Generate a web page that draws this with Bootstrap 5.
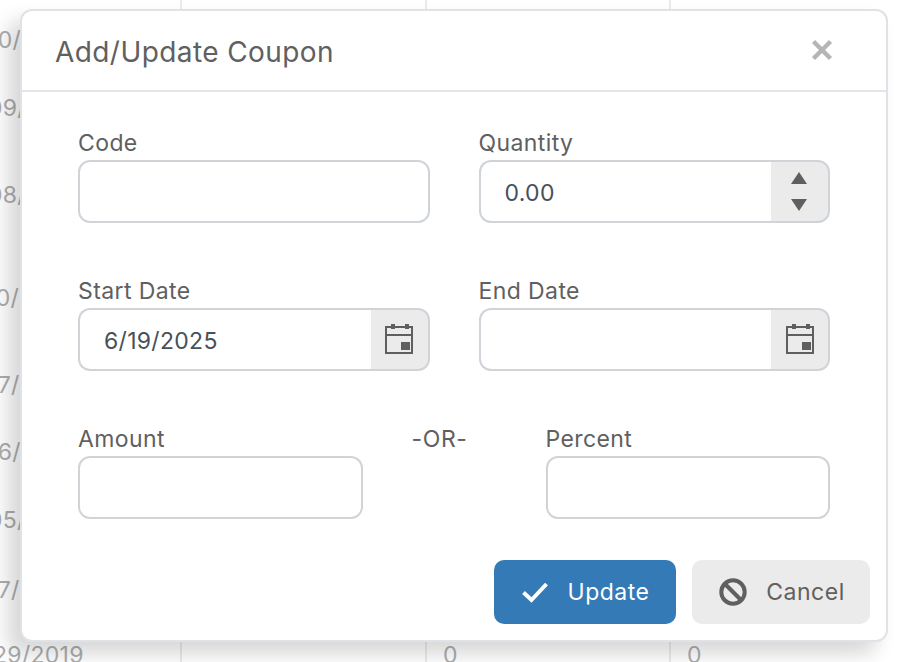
<!DOCTYPE html>
<html lang="en">
<head>
  <meta charset="UTF-8" />
  <meta name="viewport" content="width=device-width, initial-scale=1" />
  <title>Add/Update Coupon</title>
  <link href="https://cdn.jsdelivr.net/npm/bootstrap@5.3.3/dist/css/bootstrap.min.css" rel="stylesheet">
  <style>
    html, body { height: 662px; overflow: hidden; }
    body { font-family: Inter, "Liberation Sans", sans-serif; background: #fff; color: #606060; position: relative; letter-spacing: .3px; }

    /* table behind the dialog */
    .bg-grid { width: 904px; border-collapse: collapse; table-layout: fixed; font-size: 23px; color: #adadad; }
    .bg-grid td { border-left: 2px solid #ebebeb; padding: 0 0 0 16px; vertical-align: middle; white-space: nowrap; line-height: 26px; }
    .bg-grid td:first-child { border-left: 0; width: 181px; padding-left: 0; }
    .bg-grid td:first-child span { display: block; margin-left: -12px; }
    .bg-grid .r4 td:first-child span { margin-left: -14px; }
    .bg-grid .r9 td:first-child span { margin-left: -7px; }
    .bg-grid td:nth-child(2) { width: 245px; }
    .bg-grid td:nth-child(3) { width: 244px; }
    .r1 { height: 80px; } .r2 { height: 56px; } .r3 { height: 118px; } .r4 { height: 88px; }
    .r5 { height: 86px; } .r6 { height: 48px; } .r7 { height: 88px; } .r8 { height: 52px; } .r9 { height: 78px; }

    .coupon-dialog { position: absolute; left: 20px; top: 9px; width: 868px; margin: 0; max-width: none; }
    .coupon-dialog .modal-content { height: 633px; background: #fff; border: 2px solid #dfe2e6; border-radius: 12px; box-shadow: -12px 12px 20px rgba(0,0,0,.16); }
    .coupon-dialog .modal-header { height: 81px; padding: 0 53px 0 33px; border-bottom: 2px solid #e2e5e9; flex-shrink: 0; }
    .coupon-title { font-size: 28px; font-weight: 400; letter-spacing: .42px; color: #606060; margin: 2px 0 0; line-height: 1; }
    .close-x { background: none; border: 0; padding: 0; line-height: 0; margin-top: -1px; }
    .coupon-dialog .modal-body { padding: 37px 56px 0 56px; flex: 0 0 auto; }
    .field-row { display: flex; gap: 49px; margin-bottom: 54px; }
    .field-wrap { width: 352px; }
    .field-narrow { flex: 1 1 0; }
    .or-mark { flex: 0 0 183px; text-align: center; font-size: 23px; letter-spacing: .6px; line-height: 28px; padding-right: 29px; }
    .row-three { gap: 0; }
    .field-label { display: block; font-size: 23px; line-height: 28px; margin-bottom: 3px; color: #606060; letter-spacing: .4px; }
    .coupon-input.form-control { height: 63px; border: 2px solid #d0d4d8; border-radius: 12px; font-size: 23px; letter-spacing: .3px; color: #495057; padding: 2px 24px 0; box-shadow: none; }
    .input-group .coupon-input.form-control { border-right: 0; }
    .coupon-addon.input-group-text { width: 60px; padding: 0; justify-content: center; background: #ebebeb; border: 2px solid #d0d4d8; border-left: 0; border-radius: 0 12px 12px 0; }
    .spin-stack { display: flex; flex-direction: column; gap: 15px; align-items: center; }
    .cal-icon { margin: -2px 0 0 1px; }
    .coupon-dialog .modal-footer { position: absolute; right: 16px; bottom: 16px; border: 0; padding: 0; gap: 16px; }
    .coupon-dialog .modal-footer .btn { margin: 0; height: 64px; border-radius: 10px; border: 0; font-size: 23px; letter-spacing: .5px; display: flex; align-items: center; justify-content: center; gap: 19px; padding: 0; }
    .btn-update { width: 182px; background: #337ab7; color: #fff; }
    .btn-dismiss { width: 178px; background: #ebebeb; color: #606060; }
    .btn-dismiss svg { margin-left: 2px; }
  </style>
</head>
<body>
  <table class="bg-grid">
    <tr class="r1"><td><span>10/30/2019</span></td><td></td><td></td><td></td></tr>
    <tr class="r2"><td><span>09/30/2019</span></td><td></td><td></td><td></td></tr>
    <tr class="r3"><td><span>08/30/2019</span></td><td></td><td></td><td></td></tr>
    <tr class="r4"><td><span>10/30/2019</span></td><td></td><td></td><td></td></tr>
    <tr class="r5"><td><span>17/30/2019</span></td><td></td><td></td><td></td></tr>
    <tr class="r6"><td><span>16/30/2019</span></td><td></td><td></td><td></td></tr>
    <tr class="r7"><td><span>05/30/2019</span></td><td></td><td></td><td></td></tr>
    <tr class="r8"><td><span>17/30/2019</span></td><td></td><td></td><td></td></tr>
    <tr class="r9"><td><span>29/2019</span></td><td></td><td>0</td><td>0</td></tr>
  </table>

  <div class="modal-dialog coupon-dialog">
    <div class="modal-content">
      <div class="modal-header d-flex justify-content-between align-items-center">
        <h5 class="coupon-title">Add/Update Coupon</h5>
        <button type="button" class="close-x" aria-label="Close">
          <svg width="22" height="22" viewBox="0 0 22 22"><path d="M2.5 2.5 19.5 19.5M19.5 2.5 2.5 19.5" stroke="#b5b5b5" stroke-width="4.4" fill="none"/></svg>
        </button>
      </div>
      <div class="modal-body">
        <div class="field-row">
          <div class="field-wrap">
            <label class="field-label">Code</label>
            <input type="text" class="form-control coupon-input">
          </div>
          <div class="field-wrap">
            <label class="field-label">Quantity</label>
            <div class="input-group">
              <input type="text" class="form-control coupon-input" value="0.00">
              <span class="input-group-text coupon-addon">
                <span class="spin-stack">
                  <svg width="16" height="12" viewBox="0 0 16 12"><path d="M8 0 16 12H0Z" fill="#5f5f5f"/></svg>
                  <svg width="16" height="12" viewBox="0 0 16 12"><path d="M0 0H16L8 12Z" fill="#5f5f5f"/></svg>
                </span>
              </span>
            </div>
          </div>
        </div>
        <div class="field-row">
          <div class="field-wrap">
            <label class="field-label">Start Date</label>
            <div class="input-group">
              <input type="text" class="form-control coupon-input" value="6/19/2025">
              <span class="input-group-text coupon-addon">
                <svg class="cal-icon" width="28" height="30" viewBox="0 0 28 30"><path d="M1 3H27V29H1ZM1 11H27" fill="none" stroke="#5f5f5f" stroke-width="2"/><path d="M6 0H10V5H6ZM20 0H24V5H20ZM16 18H25V26H16Z" fill="#5f5f5f"/></svg>
              </span>
            </div>
          </div>
          <div class="field-wrap">
            <label class="field-label">End Date</label>
            <div class="input-group">
              <input type="text" class="form-control coupon-input">
              <span class="input-group-text coupon-addon">
                <svg class="cal-icon" width="28" height="30" viewBox="0 0 28 30"><path d="M1 3H27V29H1ZM1 11H27" fill="none" stroke="#5f5f5f" stroke-width="2"/><path d="M6 0H10V5H6ZM20 0H24V5H20ZM16 18H25V26H16Z" fill="#5f5f5f"/></svg>
              </span>
            </div>
          </div>
        </div>
        <div class="field-row row-three">
          <div class="field-narrow">
            <label class="field-label">Amount</label>
            <input type="text" class="form-control coupon-input">
          </div>
          <div class="or-mark">-OR-</div>
          <div class="field-narrow">
            <label class="field-label">Percent</label>
            <input type="text" class="form-control coupon-input">
          </div>
        </div>
      </div>
      <div class="modal-footer">
        <button type="button" class="btn btn-update">
          <svg width="28" height="22" viewBox="0 0 28 22"><path d="M2.5 11.5 10.5 19 25.5 3" fill="none" stroke="#fff" stroke-width="4"/></svg>
          Update
        </button>
        <button type="button" class="btn btn-dismiss">
          <svg width="28" height="28" viewBox="0 0 28 28"><circle cx="14" cy="14" r="11.7" fill="none" stroke="#5f5f5f" stroke-width="4"/><path d="M5.5 5.5 22.5 22.5" stroke="#5f5f5f" stroke-width="4"/></svg>
          Cancel
        </button>
      </div>
    </div>
  </div>
  <script src="https://cdn.jsdelivr.net/npm/bootstrap@5.3.3/dist/js/bootstrap.bundle.min.js"></script>
</body>
</html>
